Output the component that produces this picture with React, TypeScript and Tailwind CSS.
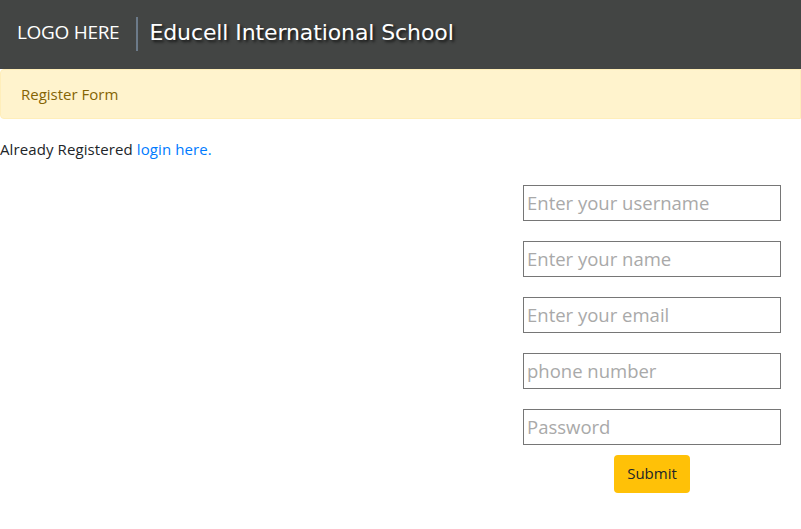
const fields = [
  { name: 'username', type: 'text', placeholder: 'Enter your username' },
  { name: 'name', type: 'text', placeholder: 'Enter your name' },
  { name: 'email', type: 'email', placeholder: 'Enter your email' },
  { name: 'phone', type: 'text', placeholder: 'phone number' },
  { name: 'password', type: 'password', placeholder: 'Password' },
]

export default function App() {
  return (
    <div className="min-h-[529px] bg-white font-['Open_Sans',sans-serif] text-[#212529]">
      {/* navbar */}
      <nav className="flex h-[69px] items-center bg-[#434544] pb-[5px] pl-[17px]">
        <span className="text-[19px] tracking-[-0.3px] text-white">LOGO HERE</span>
        <span className="ml-[17px] mt-[3px] h-[34px] w-[2px] bg-[#6c7a89]" />
        <span className="ml-[11px] font-['DejaVu_Sans',sans-serif] text-[22px] tracking-[-0.1px] text-white [text-shadow:2px_2px_3px_rgba(0,0,0,0.7)]">
          Educell International School
        </span>
      </nav>

      {/* alert */}
      <div className="flex h-[50px] items-center rounded-l border border-[#ffeeba] bg-[#fff3cd] pl-[20px] text-[15px] text-[#856404]">
        Register Form
      </div>

      <p className="mt-[19px] text-[15px] tracking-[0.1px]">
        Already Registered{' '}
        <a href="#" className="text-[#007bff]">login here.</a>
      </p>

      {/* form */}
      <div className="mt-[24px] flex justify-end pr-[20px]">
        <form className="flex w-[258px] flex-col items-center gap-[20px]">
          {fields.map(f => (
            <input key={f.name} type={f.type} name={f.name} placeholder={f.placeholder}
              className="h-[36px] w-full border border-[#767676] px-[3px] text-[18.5px] outline-none placeholder:text-[#a9a9a9]" />
          ))}
          <button type="button"
            className="-mt-[10px] h-[38px] w-[76px] rounded bg-[#ffc107] text-[15px] text-[#212529]">
            Submit
          </button>
        </form>
      </div>
    </div>
  )
}
